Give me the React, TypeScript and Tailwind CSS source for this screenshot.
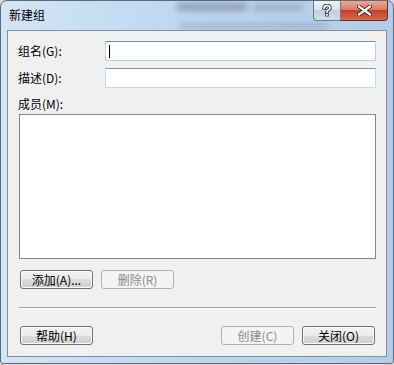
import React from 'react';

const Btn: React.FC<{ children: React.ReactNode; disabled?: boolean; className?: string }> = ({ children, disabled, className = '' }) => {
  const base =
    "h-[19px] w-[73px] rounded-[3px] border text-[12px] leading-none flex items-center justify-center font-['Noto_Sans_CJK_SC',sans-serif] ";
  const look = disabled
    ? 'border-[#adb2b5] bg-[#f4f4f4] text-[#8a8a8a]'
    : 'border-[#707070] bg-[linear-gradient(#f2f2f2_0%,#ebebeb_50%,#dddddd_50%,#cfcfcf_100%)] shadow-[inset_0_0_0_1px_#fbfbfb] text-black';
  return <button className={base + look + ' ' + className}>{children}</button>;
};

export default function App() {
  return (
    <div className="w-[394px] h-[365px] bg-[#e6d8d0]">
      {/* window frame */}
      <div className="relative w-[394px] h-[364px] rounded-t-[7px] rounded-b-[3px] border border-[#5b6a7c] bg-[linear-gradient(90deg,#d3e5f6_0%,#c0d7ef_45%,#b3cce8_100%)] flex flex-col overflow-hidden">
        {/* blurred stuff behind the glass */}
        <div className="absolute left-[176px] top-[2px] w-[70px] h-[8px] bg-[#6d7f96] opacity-60 blur-[3px]" />
        <div className="absolute left-[252px] top-[3px] w-[50px] h-[7px] bg-[#7d8ea4] opacity-50 blur-[3px]" />
        <div className="absolute left-[178px] top-[22px] w-[150px] h-[6px] bg-[#8597ad] opacity-50 blur-[3px]" />

        {/* title bar */}
        <div className="relative h-[29px] flex items-start">
          <span className="mt-[7px] ml-[8px] text-[12px] leading-[14px] text-black font-['Noto_Sans_CJK_SC',sans-serif]">新建组</span>
          <div className="ml-auto mr-[5px] flex">
            <div className="w-[28px] h-[20px] rounded-bl-[4px] border border-t-0 border-[#6b7a8d] bg-[linear-gradient(#eef2f7_0%,#dbe3ec_45%,#c3cfdc_50%,#d3dde8_100%)] flex items-center justify-center">
              <svg width="10" height="13" viewBox="0 0 10 13">
                <path d="M2 4 Q2 1.5 5 1.5 Q8 1.5 8 4 Q8 5.5 5.5 6.5 L5 8" fill="none" stroke="#3c4652" strokeWidth="3.6" strokeLinecap="square" />
                <rect x="3.2" y="9.2" width="3.6" height="3.3" fill="#3c4652" />
                <path d="M2 4 Q2 1.5 5 1.5 Q8 1.5 8 4 Q8 5.5 5.5 6.5 L5 8" fill="none" stroke="#ffffff" strokeWidth="1.7" strokeLinecap="square" />
                <rect x="4.1" y="10" width="1.8" height="1.7" fill="#ffffff" />
              </svg>
            </div>
            <div className="w-[47px] h-[20px] rounded-br-[4px] border border-l-0 border-t-0 border-[#6e2a22] bg-[linear-gradient(#e9a99c_0%,#d97c67_45%,#c2432b_50%,#d3694f_100%)] flex items-center justify-center">
              <svg width="15" height="11" viewBox="0 0 15 11">
                <path d="M2 1.5 L13 9.5 M13 1.5 L2 9.5" stroke="#3a1a14" strokeWidth="4" strokeLinecap="square" />
                <path d="M2 1.5 L13 9.5 M13 1.5 L2 9.5" stroke="#ffffff" strokeWidth="2.2" strokeLinecap="square" />
              </svg>
            </div>
          </div>
        </div>

        {/* client area */}
        <div className="relative flex-1 mx-[6px] mb-[6px] border border-[#7f90a5] bg-[#f0f0f0] pl-[11px] pr-[10px] pt-[10px] flex flex-col text-[12px] text-black font-['Noto_Sans_CJK_SC',sans-serif]">
          <div className="h-[20px] flex items-center">
            <span className="w-[87px] -ml-px leading-none">组名(G):</span>
            <div className="flex-1 h-[20px] border border-[#b7d2ea] border-t-[#5b93c2] bg-white flex items-center pl-[3px]">
              <span className="w-px h-[13px] bg-black" />
            </div>
          </div>
          <div className="mt-[7px] h-[20px] flex items-center">
            <span className="w-[87px] -ml-px leading-none">描述(D):</span>
            <div className="flex-1 h-[20px] border border-[#c3dbef] border-t-[#6a9dc8] bg-white" />
          </div>
          <span className="mt-[10px] h-[12px] -ml-px leading-[12px]">成员(M):</span>
          <div className="mt-[4px] h-[145px] border border-[#828790] bg-white" />
          <div className="mt-[11px] flex gap-[8px] ml-px">
            <Btn>添加(A)...</Btn>
            <Btn disabled>删除(R)</Btn>
          </div>
          <div className="mt-[18px] border-t border-b border-t-[#a0a0a0] border-b-white" />
          <div className="mt-[17px] flex items-center ml-px">
            <Btn>帮助(H)</Btn>
            <div className="ml-auto mr-px flex gap-[8px]">
              <Btn disabled>创建(C)</Btn>
              <Btn>关闭(O)</Btn>
            </div>
          </div>
        </div>
      </div>
    </div>
  );
}
